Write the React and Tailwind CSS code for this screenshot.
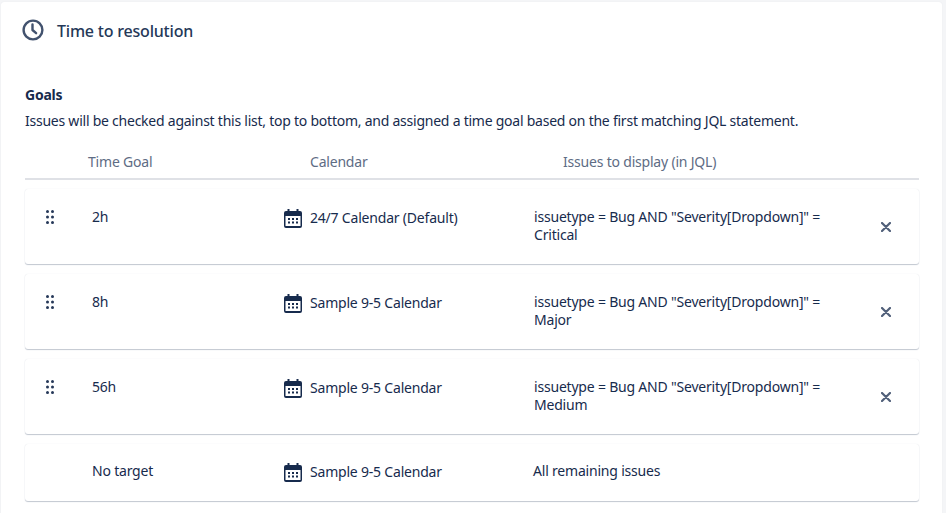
import React from "react";

const rows = [
  { goal: "2h", calendar: "24/7 Calendar (Default)", jql: 'issuetype = Bug AND "Severity[Dropdown]" = Critical' },
  { goal: "8h", calendar: "Sample 9-5 Calendar", jql: 'issuetype = Bug AND "Severity[Dropdown]" = Major' },
  { goal: "56h", calendar: "Sample 9-5 Calendar", jql: 'issuetype = Bug AND "Severity[Dropdown]" = Medium' },
];

const ClockIcon = () => (
  <svg width="24" height="24" viewBox="0 0 24 24" fill="none" stroke="#42526E" strokeWidth="2.4" strokeLinecap="round" strokeLinejoin="round">
    <circle cx="12" cy="12" r="9.4" />
    <path d="M11.5 6.5V12l3.6 3.2" />
  </svg>
);

const CalendarIcon = () => (
  <svg width="18" height="19" viewBox="0 0 18 19" className="shrink-0">
    <path fill="#172B4D" d="M3.5 0h2v2h7V0h2v2h1.5A2 2 0 0 1 18 4v13a2 2 0 0 1-2 2H2a2 2 0 0 1-2-2V4a2 2 0 0 1 2-2h1.5z" />
    <rect x="1.5" y="7" width="15" height="10" fill="#fff" />
    <g fill="#172B4D">
      <rect x="4" y="9" width="2" height="2" />
      <rect x="8" y="9" width="2" height="2" />
      <rect x="12" y="9" width="2" height="2" />
      <rect x="4" y="12.5" width="2" height="2" />
      <rect x="8" y="12.5" width="2" height="2" />
      <rect x="12" y="12.5" width="2" height="2" />
    </g>
  </svg>
);

const DragIcon = () => (
  <svg width="8" height="14" viewBox="0 0 8 14" fill="#253858" className="block">
    <circle cx="1.5" cy="1.5" r="1.5" />
    <circle cx="6.5" cy="1.5" r="1.5" />
    <circle cx="1.5" cy="7" r="1.5" />
    <circle cx="6.5" cy="7" r="1.5" />
    <circle cx="1.5" cy="12.5" r="1.5" />
    <circle cx="6.5" cy="12.5" r="1.5" />
  </svg>
);

const CloseIcon = () => (
  <svg width="10" height="10" viewBox="0 0 10 10" stroke="#505F79" strokeWidth="2.2" strokeLinecap="round">
    <path d="M1 1l8 8M9 1l-8 8" />
  </svg>
);

const cardClass =
  "flex rounded-[3px] bg-white shadow-[0_1px_1px_#c1c7d0,0_0_1px_#dfe1e6] text-[14px] leading-[18px] tracking-[-0.2px] text-[#172B4D]";

export default function App() {
  return (
    <div
      className="h-[513px] overflow-hidden bg-[#f4f5f7] pl-px pr-[4px] pt-[2px] text-[#172B4D]"
      style={{ fontFamily: '"Noto Sans", sans-serif' }}
    >
      <div className="h-full rounded-t-[3px] bg-white pl-[24px] pr-[23px] shadow-[0_0_1px_#dfe1e6]">
        <div className="-ml-[4px] flex items-center gap-[12px] pt-[15px]">
          <ClockIcon />
          <h2 className="pt-[2px] text-[16px] leading-[24px] font-medium tracking-[-0.2px] text-[#253858]">Time to resolution</h2>
        </div>

        <h3 className="mt-[43px] text-[14px] leading-[18px] font-bold tracking-[-0.24px]">Goals</h3>
        <p className="mt-[8px] text-[14px] leading-[18px] tracking-[-0.24px] whitespace-nowrap">
          Issues will be checked against this list, top to bottom, and assigned a time goal based on the first matching JQL statement.
        </p>

        <div className="mt-[23px] flex h-[27px] border-b-2 border-[#dfe1e6] text-[14px] leading-[18px] tracking-[-0.2px] text-[#5E6C84]">
          <div className="w-[285px] pl-[63px]">Time Goal</div>
          <div className="w-[253px]">Calendar</div>
          <div>Issues to display (in JQL)</div>
        </div>

        <div className="mt-[9px] flex flex-col gap-[10px]">
          {rows.map((row) => (
            <div key={row.goal} className={`${cardClass} h-[75px]`}>
              <div className="w-[67px] pl-[21px] pt-[21px]">
                <DragIcon />
              </div>
              <div className="w-[192px] pt-[19px]">{row.goal}</div>
              <div className="flex w-[250px] items-start gap-[8px] pt-[20px]">
                <CalendarIcon />
                <span>{row.calendar}</span>
              </div>
              <div className="w-[300px] pt-[19px]">{row.jql}</div>
              <div className="flex flex-1 items-center justify-end pr-[28px]">
                <CloseIcon />
              </div>
            </div>
          ))}
          <div className={`${cardClass} h-[57px]`}>
            <div className="w-[67px]" />
            <div className="w-[192px] pt-[18px]">No target</div>
            <div className="flex w-[250px] items-start gap-[8px] pt-[19px]">
              <CalendarIcon />
              <span>Sample 9-5 Calendar</span>
            </div>
            <div className="-ml-px pt-[18px]">All remaining issues</div>
          </div>
        </div>
      </div>
    </div>
  );
}
